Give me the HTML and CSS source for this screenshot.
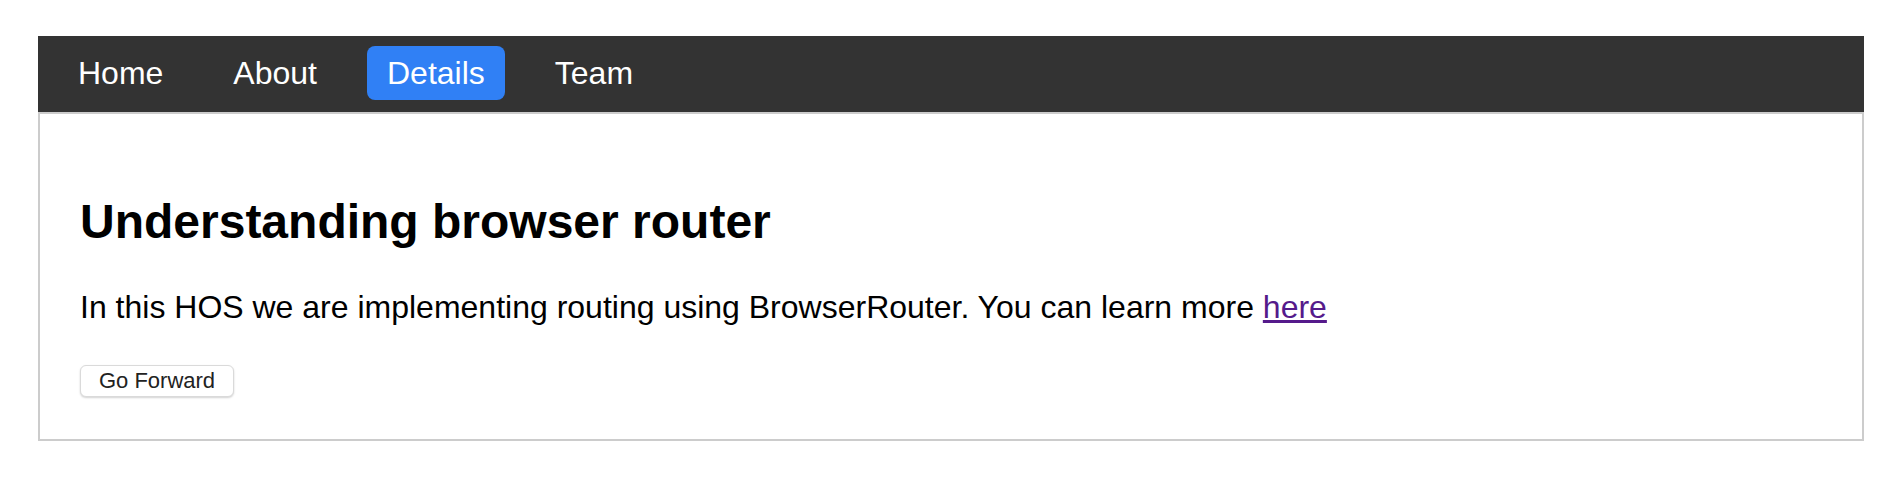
FILE: index.html
```html
<!DOCTYPE html>
<html lang="en">
<head>
<meta charset="utf-8">
<title>Details</title>
<link rel="stylesheet" href="styles.css">
</head>
<body>
<div class="app">
  <nav class="navbar">
    <a class="nav-link" href="#">Home</a>
    <a class="nav-link" href="#">About</a>
    <a class="nav-link active" href="#">Details</a>
    <a class="nav-link" href="#">Team</a>
  </nav>
  <main class="card">
    <h1 class="title">Understanding browser router</h1>
    <p class="text">In this HOS we are implementing routing using BrowserRouter. You can learn more <a class="visited-link" href="#">here</a></p>
    <button class="btn" type="button">Go Forward</button>
  </main>
</div>
</body>
</html>
```

FILE: styles.css
```css
html, body {
  margin: 0;
  padding: 0;
  background: #ffffff;
}

body {
  font-family: "Liberation Sans", Arial, Helvetica, sans-serif;
  color: #000;
}

.app {
  margin: 36px 40px 0 38px;
}

.navbar {
  display: flex;
  align-items: center;
  gap: 30px;
  height: 76px;
  box-sizing: border-box;
  padding: 10px 20px 12px;
  background: #333333;
}

.nav-link {
  display: flex;
  align-items: center;
  height: 54px;
  padding: 0 20px;
  border-radius: 8px;
  color: #ffffff;
  text-decoration: none;
  font-size: 32px;
}

.nav-link.active {
  background: #3080f5;
}

.card {
  border: 2px solid #cccccc;
  padding: 80px 40px 42px;
}

.title {
  margin: 0;
  font-size: 48px;
  line-height: 56px;
  font-weight: bold;
}

.text {
  margin: 39px 0 39px;
  font-size: 32px;
  line-height: 37px;
}

.visited-link {
  color: #551a8b;
}

.btn {
  display: block;
  height: 32px;
  width: 154px;
  padding: 0;
  background: #ffffff;
  border: 1px solid #dadada;
  border-radius: 6px;
  box-shadow: 0 1px 2px rgba(0, 0, 0, 0.18);
  font-family: "Liberation Sans", Arial, Helvetica, sans-serif;
  font-size: 22px;
  color: #222222;
}
```
